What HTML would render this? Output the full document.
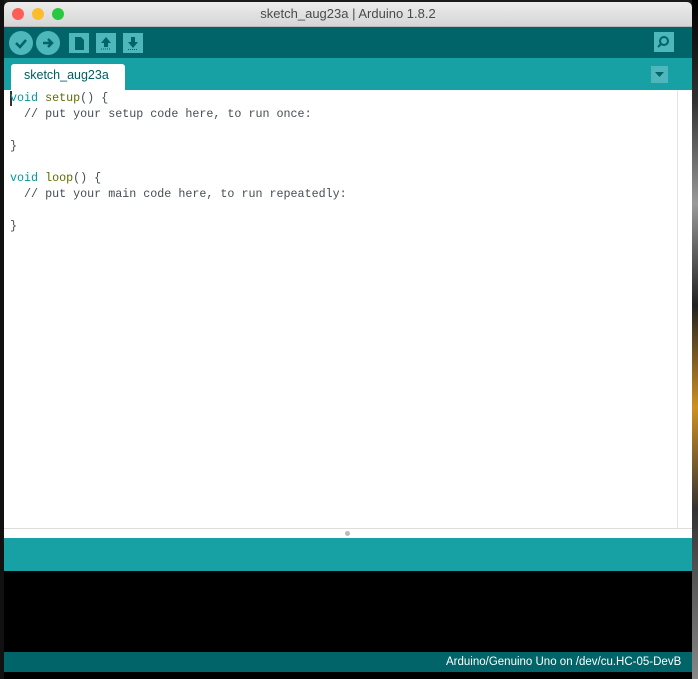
<!DOCTYPE html>
<html><head><style>
body{margin:0;width:698px;height:679px;background:#1a1a1a;position:relative;overflow:hidden;font-family:"Liberation Sans",sans-serif}
.a{position:absolute}
.code{font-family:"Liberation Mono",monospace;font-size:11.7px;line-height:16px;white-space:pre;color:#434f54}
.btn{position:absolute;top:33px;width:20px;height:20px;background:#4db7bb}
.c{position:absolute;top:31px;width:24px;height:24px;border-radius:50%;background:#4db7bb}
</style></head><body>
<div class="a" style="left:0;top:0;width:4px;height:679px;background:#111"></div>
<div class="a" style="left:692px;top:0;width:6px;height:679px;background:linear-gradient(#000,#333 15%,#999 30%,#222 45%,#d09020 60%,#333 75%,#888 100%)"></div>
<div class="a" style="left:4px;top:2px;width:688px;height:24px;background:linear-gradient(#ececec,#d6d6d6);border-radius:5px 5px 0 0;border-bottom:1px solid #b8b8b8"></div>
<div class="a" style="left:12px;top:8px;width:12px;height:12px;border-radius:50%;background:#fc5f57"></div>
<div class="a" style="left:32px;top:8px;width:12px;height:12px;border-radius:50%;background:#fdbc2e"></div>
<div class="a" style="left:52px;top:8px;width:12px;height:12px;border-radius:50%;background:#28c840"></div>
<div class="a" style="left:4px;top:6px;width:688px;text-align:center;font-size:13px;color:#4a4a4a">sketch_aug23a | Arduino 1.8.2</div>
<div class="a" style="left:4px;top:27px;width:688px;height:31px;background:#006468"></div>
<div class="c" style="left:9px"><svg width="24" height="24"><path d="M7 12l4 4 6-7" stroke="#006468" stroke-width="2.5" fill="none"/></svg></div>
<div class="c" style="left:36px"><svg width="24" height="24"><path d="M7 12h8M12 8l4 4-4 4" stroke="#006468" stroke-width="2.5" fill="none"/></svg></div>
<div class="btn" style="left:69px"><svg width="20" height="20"><path d="M6 4h6l3 3v10H6z" fill="#006468"/></svg></div>
<div class="btn" style="left:96px"><svg width="20" height="20"><path d="M10 4l5 6h-3v4H8v-4H5z" fill="#006468"/><path d="M5 16h10" stroke="#006468" stroke-dasharray="1 1"/></svg></div>
<div class="btn" style="left:123px"><svg width="20" height="20"><path d="M10 15l5-6h-3V4H8v5H5z" fill="#006468"/><path d="M5 16.5h10" stroke="#006468" stroke-dasharray="1 1"/></svg></div>
<div class="btn" style="left:654px;top:32px"><svg width="20" height="20"><circle cx="10" cy="9" r="4" stroke="#006468" stroke-width="2" fill="none"/><path d="M7 12l-3 3" stroke="#006468" stroke-width="2"/></svg></div>
<div class="a" style="left:4px;top:58px;width:688px;height:32px;background:#17a1a5"></div>
<div class="a" style="left:11px;top:64px;width:114px;height:26px;background:#fff;border-radius:3px 3px 0 0"></div>
<div class="a" style="left:24px;top:68px;font-size:12.5px;color:#005c60">sketch_aug23a</div>
<div class="a" style="left:651px;top:66px;width:17px;height:17px;background:#4db7bb"><svg width="17" height="17"><path d="M4 6h9l-4.5 5z" fill="#006468"/></svg></div>
<div class="a" style="left:4px;top:90px;width:688px;height:438px;background:#fff"></div>
<div class="a" style="left:677px;top:90px;width:1px;height:438px;background:#e4e4e4"></div>
<div class="a" style="left:10px;top:91px;width:2px;height:15px;background:#333"></div>
<div class="a code" style="left:10px;top:90px"><span style="color:#00979c">void</span> <span style="color:#5e6d03">setup</span>() {
  // put your setup code here, to run once:

}

<span style="color:#00979c">void</span> <span style="color:#5e6d03">loop</span>() {
  // put your main code here, to run repeatedly:

}</div>
<div class="a" style="left:4px;top:528px;width:688px;height:9px;background:#fff;border-top:1px solid #ddd"></div>
<div class="a" style="left:345px;top:531px;width:5px;height:5px;border-radius:50%;background:#bbb"></div>
<div class="a" style="left:4px;top:538px;width:688px;height:33px;background:#17a1a5"></div>
<div class="a" style="left:4px;top:571px;width:688px;height:81px;background:#000"></div>
<div class="a" style="left:4px;top:652px;width:688px;height:20px;background:#006468"></div>
<div class="a" style="left:446px;top:656px;font-size:11.5px;color:#fff">Arduino/Genuino Uno on /dev/cu.HC-05-DevB</div>
<div class="a" style="left:4px;top:672px;width:688px;height:7px;background:#000"></div>
</body></html>
